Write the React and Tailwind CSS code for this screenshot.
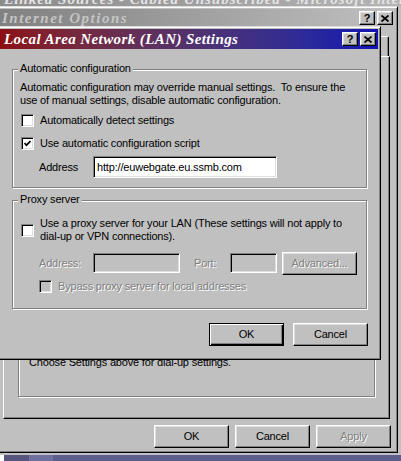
import React from "react";

const frame =
  "border border-[#dfdfdf] border-r-black border-b-black shadow-[inset_1px_1px_0_#fff,inset_-1px_-1px_0_#808080] p-[2px] bg-[#c0c0c0]";
const raised =
  "border border-white border-r-black border-b-black shadow-[inset_-1px_-1px_0_#808080,inset_1px_1px_0_#dfdfdf] bg-[#c0c0c0]";
const sunken =
  "border border-[#808080] border-r-white border-b-white shadow-[inset_1px_1px_0_#000,inset_-1px_-1px_0_#dfdfdf]";
const etched = "border border-[#808080] shadow-[inset_1px_1px_0_#fff,1px_1px_0_#fff]";
const dim = "text-[#808080] [text-shadow:1px_1px_0_#fff]";
const title = "font-['Liberation_Serif',serif] font-bold italic text-[15px] leading-none whitespace-nowrap";

const CapButton = ({ kind }) => (
  <div className={`${raised} w-[16px] h-[14px] flex items-center justify-center`}>
    {kind === "help" ? (
      <span className="text-[11px] font-bold leading-none text-black tracking-normal">?</span>
    ) : (
      <svg width="8" height="7" viewBox="0 0 8 7">
        <path d="M0.5 0.5 L7.5 6.5 M7.5 0.5 L0.5 6.5" stroke="#000" strokeWidth="1.8" />
      </svg>
    )}
  </div>
);

const CheckBox = ({ checked, disabled, className = "" }) => (
  <div
    className={`${sunken} w-[13px] h-[13px] shrink-0 flex items-center justify-center ${
      disabled ? "bg-[#c0c0c0]" : "bg-white"
    } ${className}`}
  >
    {checked && (
      <svg width="7" height="7" viewBox="0 0 7 7">
        <polyline points="0.5,3 2.5,5.2 6.5,1" fill="none" stroke="#000" strokeWidth="1.7" />
      </svg>
    )}
  </div>
);

const Button = ({ children, primary, disabled, className = "" }) => (
  <div
    className={`w-[75px] h-[23px] flex items-center justify-center text-[11px] bg-[#c0c0c0] ${
      primary
        ? "border border-black shadow-[inset_1px_1px_0_#fff,inset_-1px_-1px_0_#000,inset_-2px_-2px_0_#808080]"
        : raised
    } ${disabled ? dim : "text-black"} ${className}`}
  >
    {children}
  </div>
);

const Group = ({ label, className = "", children }) => (
  <div className={`relative ${etched} ${className}`}>
    <div className="absolute -top-[8px] left-[5px] px-[2px] bg-[#c0c0c0] leading-[13px] text-black">
      {label}
    </div>
    {children}
  </div>
);

export default function App() {
  return (
    <div className="relative w-[401px] h-[461px] overflow-hidden bg-[#c0c0c0] font-['Liberation_Sans',Arial,sans-serif] text-[11px] leading-[13px] tracking-[-0.18px] text-black">
      {/* browser title behind */}
      <div className="absolute top-0 left-0 w-full h-[6px] overflow-hidden">
        <div className={`-mt-[8px] h-[14px] pl-[4px] bg-gradient-to-r from-[#8c8c8c] to-[#b4b4b4] text-[#e4e4e4] tracking-[1px] ${title}`}>
          Linked Sources - Cabled Unsubscribed - Microsoft Internet Explorer
        </div>
      </div>

      {/* Internet Options */}
      <div className={`absolute left-[-4px] top-[6px] w-[402px] h-[447px] ${frame} flex flex-col`}>
        <div className="h-[18px] flex items-center justify-between pl-[3px] pr-[2px] bg-gradient-to-r from-[#808080] to-[#c0c0c0]">
          <span className={`${title} text-[#c4c4c4] tracking-[1.5px]`}>Internet Options</span>
          <div className="flex gap-[2px]">
            <CapButton kind="help" />
            <CapButton kind="close" />
          </div>
        </div>
        <div className="mt-[9px] flex justify-end pr-[6px]">
          <div className="w-[60px] h-[20px] border border-white border-r-black border-b-0 shadow-[inset_-1px_0_0_#808080] rounded-t-[2px]" />
        </div>
        <div className="ml-[4px] w-[387px] h-[363px] border border-white border-r-black border-b-black shadow-[inset_-1px_-1px_0_#808080] flex flex-col justify-end pb-[21px]">
          <div className={`ml-[14px] w-[357px] h-[96px] ${etched} pt-[54px] pl-[10px]`}>
            Choose Settings above for dial-up settings.
          </div>
        </div>
        <div className="mt-[6px] flex justify-end gap-[6px] pr-[4px]">
          <Button>OK</Button>
          <Button>Cancel</Button>
          <Button disabled>Apply</Button>
        </div>
      </div>

      {/* taskbar */}
      <div className="absolute left-0 bottom-0 w-full h-[6px] flex bg-[#5e5e8c]">
        <div className="w-[4px] bg-white" />
        <div className="w-[25px] bg-[#55557f]" />
        <div className="w-[24px] bg-[#7070a0]" />
      </div>

      {/* LAN settings dialog */}
      <div className={`absolute left-[-4px] top-[26px] w-[385px] h-[334px] ${frame} flex flex-col`}>
        <div className="h-[20px] flex items-center justify-between pl-[5px] pr-[2px] bg-gradient-to-r from-[#8c0c10] to-[#1010b4]">
          <span className={`${title} text-white tracking-[0.4px]`}>Local Area Network (LAN) Settings</span>
          <div className="flex gap-[2px]">
            <CapButton kind="help" />
            <CapButton kind="close" />
          </div>
        </div>

        <Group label="Automatic configuration" className="ml-[13px] mt-[20px] w-[355px] h-[119px] pt-[11px] pl-[7px]">
          <p className="whitespace-nowrap">
            Automatic configuration may override manual settings.&nbsp; To ensure the
            <br />
            use of manual settings, disable automatic configuration.
          </p>
          <div className="mt-[7px] flex items-center gap-[6px]">
            <CheckBox className="ml-[1px]" />
            <span>Automatically detect settings</span>
          </div>
          <div className="mt-[10px] flex items-center gap-[6px]">
            <CheckBox className="ml-[1px]" checked />
            <span>Use automatic configuration script</span>
          </div>
          <div className="mt-[6px] flex items-center">
            <span className="ml-[19px] w-[54px]">Address</span>
            <div className={`${sunken} bg-white w-[184px] h-[22px] flex items-center pl-[3px]`}>
              http://euwebgate.eu.ssmb.com
            </div>
          </div>
        </Group>

        <Group label="Proxy server" className="ml-[13px] mt-[12px] w-[355px] h-[109px] pt-[16px] pl-[7px]">
          <div className="flex items-center gap-[6px]">
            <CheckBox className="ml-[1px]" />
            <span className="whitespace-nowrap">
              Use a proxy server for your LAN (These settings will not apply to
              <br />
              dial-up or VPN connections).
            </span>
          </div>
          <div className="mt-[9px] h-[22px] flex items-center">
            <span className={`ml-[19px] w-[54px] ${dim}`}>Address:</span>
            <div className={`${sunken} w-[87px] h-[20px]`} />
            <span className={`ml-[14px] w-[36px] ${dim}`}>Port:</span>
            <div className={`${sunken} w-[47px] h-[20px]`} />
            <Button disabled className="ml-[5px] h-[22px]">
              Advanced...
            </Button>
          </div>
          <div className="mt-[6px] flex items-center gap-[6px]">
            <CheckBox className="ml-[19px]" disabled />
            <span className={dim}>Bypass proxy server for local addresses</span>
          </div>
        </Group>

        <div className="mt-[14px] flex justify-end gap-[9px] pr-[10px]">
          <Button primary>OK</Button>
          <Button>Cancel</Button>
        </div>
      </div>
    </div>
  );
}
